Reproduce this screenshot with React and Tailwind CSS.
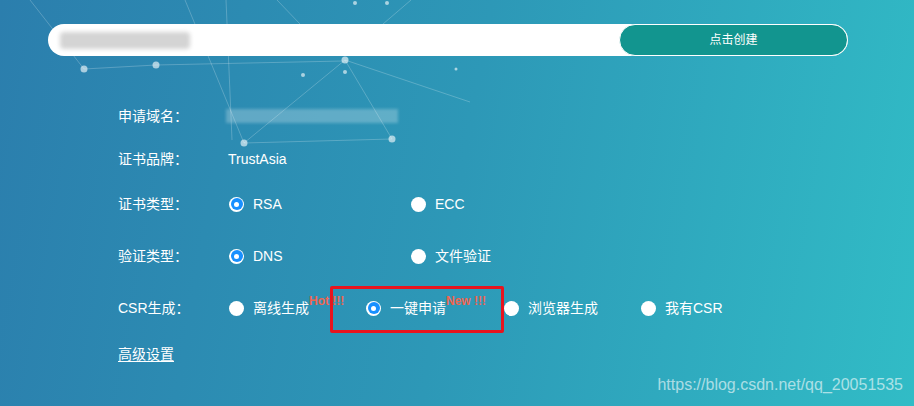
import React, { useState } from 'react';

const lines = [
  [30, 0, 84, 69], [84, 69, 156, 65], [156, 65, 343, 61],
  [185, 0, 244, 143], [226, 0, 232, 140], [244, 143, 345, 60], [345, 60, 392, 139],
  [244, 143, 392, 139], [345, 60, 470, 102], [277, 0, 300, 24], [411, 0, 383, 24],
];
const dots = [
  [84, 69, 3.5], [156, 65, 3.5], [345, 60, 3.5], [345, 72, 2], [303, 75, 2], [355, 3, 2],
  [387, 3, 2], [244, 143, 3.5], [392, 139, 3.5], [456, 69, 1.5],
];

const Network = () => (
  <svg className="absolute inset-0 pointer-events-none" width="914" height="406">
    {lines.map((l, i) => (
      <line key={i} x1={l[0]} y1={l[1]} x2={l[2]} y2={l[3]} stroke="#ffffff" strokeOpacity="0.22" strokeWidth="1" />
    ))}
    {dots.map((d, i) => (
      <circle key={i} cx={d[0]} cy={d[1]} r={d[2]} fill="#ffffff" fillOpacity="0.6" />
    ))}
  </svg>
);

const Radio = ({ checked }) => (
  <span className="w-[15px] h-[15px] rounded-full bg-white flex items-center justify-center shrink-0">
    {checked && (
      <span className="w-[12px] h-[12px] rounded-full bg-[#1890ff] flex items-center justify-center">
        <span className="w-[5px] h-[5px] rounded-full bg-white" />
      </span>
    )}
  </span>
);

const Option = ({ label, checked, onClick, width, tag, boxed }) => (
  <div className={`relative flex items-center ${width}`} onClick={onClick}>
    {boxed && <div className="absolute left-[-36px] top-[-12px] w-[174px] h-[47px] border-[3px] border-[#e8141e] rounded-[2px]" />}
    <Radio checked={checked} />
    <span className="ml-[9px]">{label}</span>
    {tag && <span className="text-[12px] font-bold text-[#f0654f] -translate-y-[7px] leading-none">{tag}</span>}
  </div>
);

const Row = ({ label, className, children }) => (
  <div className={`flex items-center h-[20px] ${className}`}>
    <div className="w-[111px] shrink-0">{label}</div>
    {children}
  </div>
);

const App = () => {
  const [keyType, setKeyType] = useState('RSA');
  const [verify, setVerify] = useState('DNS');
  const [csr, setCsr] = useState('onekey');

  return (
    <div className="relative w-[914px] h-[406px] overflow-hidden bg-[linear-gradient(100deg,#2b7ead_0%,#2d98b7_50%,#31bcc6_100%)] text-white text-[14px] font-['Liberation_Sans','Noto_Sans_CJK_SC',sans-serif]">
      <Network />
      <div className="relative pt-[24px] pl-[48px]">
        <div className="flex w-[800px] h-[32px] bg-white rounded-full items-center">
          <div className="ml-[12px] w-[130px] h-[17px] bg-[#d4d4d4] blur-[2px] rounded-sm" />
          <div className="flex-1" />
          <button className="w-[229px] h-[32px] rounded-full bg-[#12958f] border border-white text-[12px] text-white">点击创建</button>
        </div>
      </div>

      <div className="relative pl-[118px] flex flex-col">
        <Row label="申请域名：" className="mt-[50px]">
          <div className="w-[172px] h-[14px] bg-white/25 blur-[1.5px] -ml-[3px]" />
        </Row>
        <Row label="证书品牌：" className="mt-[23px]">
          <span className="-ml-[1px]">TrustAsia</span>
        </Row>
        <Row label="证书类型：" className="mt-[25px]">
          <Option label="RSA" width="w-[182px]" checked={keyType === 'RSA'} onClick={() => setKeyType('RSA')} />
          <Option label="ECC" width="w-[182px]" checked={keyType === 'ECC'} onClick={() => setKeyType('ECC')} />
        </Row>
        <Row label="验证类型：" className="mt-[32px]">
          <Option label="DNS" width="w-[182px]" checked={verify === 'DNS'} onClick={() => setVerify('DNS')} />
          <Option label="文件验证" width="w-[182px]" checked={verify === 'FILE'} onClick={() => setVerify('FILE')} />
        </Row>
        <Row label="CSR生成：" className="mt-[32px]">
          <Option label="离线生成" tag="Hot !!!" width="w-[137px]" checked={csr === 'offline'} onClick={() => setCsr('offline')} />
          <Option label="一键申请" tag="New !!!" boxed width="w-[138px]" checked={csr === 'onekey'} onClick={() => setCsr('onekey')} />
          <Option label="浏览器生成" width="w-[137px]" checked={csr === 'browser'} onClick={() => setCsr('browser')} />
          <Option label="我有CSR" width="w-[137px]" checked={csr === 'own'} onClick={() => setCsr('own')} />
        </Row>
        <div className="mt-[26px] h-[20px] flex items-center">
          <a className="underline underline-offset-2 cursor-pointer">高级设置</a>
        </div>
      </div>

      <div className="absolute right-[11px] bottom-[9px] text-[16px] text-white/60 font-['Liberation_Sans',sans-serif]">https://blog.csdn.net/qq_20051535</div>
    </div>
  );
};

export default App;
